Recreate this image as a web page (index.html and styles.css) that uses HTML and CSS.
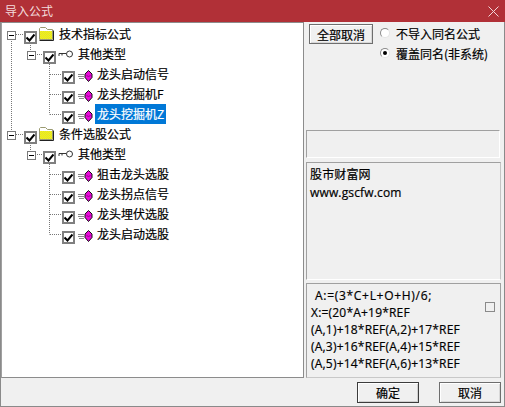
FILE: index.html
```html
<!DOCTYPE html>
<html lang="zh">
<head>
<meta charset="utf-8">
<title>导入公式</title>
<link rel="stylesheet" href="styles.css">
</head>
<body>
<svg width="0" height="0" class="defs">
  <defs>
    <pattern id="dither" width="2" height="2" patternUnits="userSpaceOnUse">
      <rect width="2" height="2" fill="#ffff00"/>
      <rect width="1" height="1" fill="#d8d840"/>
      <rect x="1" y="1" width="1" height="1" fill="#d8d840"/>
    </pattern>
    <g id="folder">
      <path d="M1.500 13.500V2.500L2.500 1.500H7.500L9.500 3.500H14.500V13.500Z" fill="#fff" stroke="#9a9a70"/>
      <path d="M2 5H14V13H2Z" fill="url(#dither)"/>
      <path d="M1.500 14.500H15.500V4.500" fill="none" stroke="#222"/>
    </g>
    <g id="key">
      <circle cx="11.500" cy="4" r="3" fill="#fff" stroke="#333"/>
      <path d="M8 3.500H1M1 3.500V6M4 3.500V5.500" fill="none" stroke="#333"/>
    </g>
    <g id="gem">
      <path d="M0 4.500H6M0 6.500H6M1 8.500H6" stroke="#8a8a8a" fill="none"/>
      <path d="M10.500 0.500L14 4V7.500L10.500 11.500L7 7.500V4Z" fill="#e808d8" stroke="#111"/>
      <path d="M8.500 5L10.500 7L12.500 5" fill="none" stroke="#900890"/>
    </g>
    <g id="tick">
      <path d="M0.500 4.500L3.500 7.500L8.500 1.500" fill="none" stroke="#000" stroke-width="2"/>
    </g>
  </defs>
</svg>
<div class="window">
  <header class="titlebar">
    <span>导入公式</span>
    <svg class="close" width="11" height="11" viewBox="0 0 11 11"><path d="M0.500 0.500L10.500 10.500M10.500 0.500L0.500 10.500" stroke="#f1d6d8" fill="none"/></svg>
  </header>
  <div class="body">
    <div class="tree">
      <svg class="lines" width="100" height="250" viewBox="0 0 100 250">
        <path d="M11.500 39V130M16 34.500H24M30.500 43V50M35 54.500H43M49.500 62V114.500M50 74.500H62M50 94.500H62M50 114.500H62M16 134.500H24M30.500 143V150M35 154.500H43M49.500 162V234.500M50 174.500H62M50 194.500H62M50 214.500H62M50 234.500H62" fill="none" stroke="#777" stroke-dasharray="1 1"/>
      </svg>
      <div class="row lvl0">
        <span class="exp"></span><span class="check"><svg width="9" height="9" viewBox="0 0 9 9"><use href="#tick"/></svg></span>
        <svg class="ico-folder" width="16" height="15" viewBox="0 0 16 15"><use href="#folder"/></svg>
        <span class="label">技术指标公式</span>
      </div>
      <div class="row lvl1">
        <span class="exp"></span><span class="check"><svg width="9" height="9" viewBox="0 0 9 9"><use href="#tick"/></svg></span>
        <svg class="ico-key" width="15" height="8" viewBox="0 0 15 8"><use href="#key"/></svg>
        <span class="label">其他类型</span>
      </div>
      <div class="row lvl2">
        <span class="check"><svg width="9" height="9" viewBox="0 0 9 9"><use href="#tick"/></svg></span>
        <svg class="ico-gem" width="15" height="12" viewBox="0 0 15 12"><use href="#gem"/></svg>
        <span class="label">龙头启动信号</span>
      </div>
      <div class="row lvl2">
        <span class="check"><svg width="9" height="9" viewBox="0 0 9 9"><use href="#tick"/></svg></span>
        <svg class="ico-gem" width="15" height="12" viewBox="0 0 15 12"><use href="#gem"/></svg>
        <span class="label">龙头挖掘机F</span>
      </div>
      <div class="row lvl2">
        <span class="check"><svg width="9" height="9" viewBox="0 0 9 9"><use href="#tick"/></svg></span>
        <svg class="ico-gem" width="15" height="12" viewBox="0 0 15 12"><use href="#gem"/></svg>
        <span class="label selected">龙头挖掘机Z</span>
      </div>
      <div class="row lvl0">
        <span class="exp"></span><span class="check"><svg width="9" height="9" viewBox="0 0 9 9"><use href="#tick"/></svg></span>
        <svg class="ico-folder" width="16" height="15" viewBox="0 0 16 15"><use href="#folder"/></svg>
        <span class="label">条件选股公式</span>
      </div>
      <div class="row lvl1">
        <span class="exp"></span><span class="check"><svg width="9" height="9" viewBox="0 0 9 9"><use href="#tick"/></svg></span>
        <svg class="ico-key" width="15" height="8" viewBox="0 0 15 8"><use href="#key"/></svg>
        <span class="label">其他类型</span>
      </div>
      <div class="row lvl2">
        <span class="check"><svg width="9" height="9" viewBox="0 0 9 9"><use href="#tick"/></svg></span>
        <svg class="ico-gem" width="15" height="12" viewBox="0 0 15 12"><use href="#gem"/></svg>
        <span class="label">狙击龙头选股</span>
      </div>
      <div class="row lvl2">
        <span class="check"><svg width="9" height="9" viewBox="0 0 9 9"><use href="#tick"/></svg></span>
        <svg class="ico-gem" width="15" height="12" viewBox="0 0 15 12"><use href="#gem"/></svg>
        <span class="label">龙头拐点信号</span>
      </div>
      <div class="row lvl2">
        <span class="check"><svg width="9" height="9" viewBox="0 0 9 9"><use href="#tick"/></svg></span>
        <svg class="ico-gem" width="15" height="12" viewBox="0 0 15 12"><use href="#gem"/></svg>
        <span class="label">龙头埋伏选股</span>
      </div>
      <div class="row lvl2">
        <span class="check"><svg width="9" height="9" viewBox="0 0 9 9"><use href="#tick"/></svg></span>
        <svg class="ico-gem" width="15" height="12" viewBox="0 0 15 12"><use href="#gem"/></svg>
        <span class="label">龙头启动选股</span>
      </div>
    </div>
    <div class="side">
      <div class="controls">
        <button class="btn btn-all">全部取消</button>
        <div class="radios">
          <div class="radio-row"><span class="radio"></span>不导入同名公式</div>
          <div class="radio-row"><span class="radio on"></span>覆盖同名(非系统)</div>
        </div>
      </div>
      <div class="etched"></div>
      <div class="info">股市财富网<br>www.gscfw.com</div>
      <div class="formula">
        <div class="code"><span class="first">A:=(3*C+L+O+H)/6;</span><br>X:=(20*A+19*REF<br>(A,1)+18*REF(A,2)+17*REF<br>(A,3)+16*REF(A,4)+15*REF<br>(A,5)+14*REF(A,6)+13*REF</div>
        <span class="small-check"></span>
      </div>
    </div>
  </div>
  <footer class="actions">
    <button class="btn btn-ok">确定</button>
    <button class="btn btn-cancel">取消</button>
  </footer>
</div>
</body>
</html>
```
FILE: styles.css
```css
* { box-sizing: border-box; }
html, body { margin: 0; padding: 0; }
body {
  width: 505px;
  height: 407px;
  overflow: hidden;
  font-family: "Noto Sans CJK SC", "Open Sans", sans-serif;
  font-size: 12px;
  color: #000;
  background: #f0f0f0;
  -webkit-text-stroke: 0.2px currentColor;
}
.defs { position: absolute; }
.window {
  width: 505px;
  height: 407px;
  display: flex;
  flex-direction: column;
  border: solid #8a8a8a;
  border-width: 0 1px 1px 1px;
  background: #f0f0f0;
}
.titlebar {
  height: 22px;
  flex: none;
  margin: 0 -1px;
  padding: 0 6px 0 5px;
  background: #b13037;
  color: #f3dcdd;
  display: flex;
  align-items: center;
  justify-content: space-between;
  line-height: 22px;
  -webkit-text-stroke: 0;
}
.body {
  height: 356px;
  flex: none;
  display: flex;
}
.tree {
  position: relative;
  width: 303px;
  height: 356px;
  padding-top: 1px;
  background: #fff;
  border: 1px solid #8c8c8c;
  border-left-color: #a0a0a0;
}
.lines { position: absolute; left: -2px; top: -23px; }
.row {
  position: relative;
  height: 20px;
  display: flex;
  align-items: center;
}
.lvl0 { padding-left: 5px; }
.lvl1 { padding-left: 25px; }
.lvl2 { padding-left: 60px; }
.exp {
  position: relative;
  width: 9px;
  height: 9px;
  margin-right: 8px;
  align-self: flex-start;
  margin-top: 7px;
  border: 1px solid #7a7a7a;
  background: #fff;
}
.lvl1 .exp { margin-right: 7px; }
.exp::after {
  content: "";
  position: absolute;
  left: 1px;
  top: 3px;
  width: 5px;
  height: 1px;
  background: #000;
}
.check {
  width: 13px;
  height: 13px;
  flex: none;
  align-self: flex-end;
  display: flex;
  align-items: center;
  justify-content: center;
  border: 2px solid #7f7f7f;
  background: #fff;
}
.check svg { display: block; }
.ico-folder { flex: none; margin: -1px 3px 0 1px; }
.ico-key { flex: none; margin: -1px 3px 0 2px; }
.ico-gem { flex: none; margin: 3px 2px 0 3px; }
.label { padding: 0 2px; line-height: 20px; white-space: nowrap; }
.selected { background: #0078d7; color: #fff; }
.side {
  width: 200px;
  flex: none;
  padding: 2px 3px 0 2px;
  display: flex;
  flex-direction: column;
}
.controls { height: 106px; display: flex; align-items: flex-start; padding-left: 3px; }
.btn {
  font: inherit;
  color: #000;
  padding: 0;
  background: #f0f0f0;
  border: 1px solid #6e6e6e;
  box-shadow: inset 1px 1px 0 #fff, inset -1px -1px 0 #d8d8d8;
}
.btn-all { width: 64px; height: 20px; line-height: 17px; }
.radios { margin-left: 7px; margin-top: -1px; }
.radio-row { height: 20px; display: flex; align-items: center; gap: 6px; white-space: nowrap; }
.radio {
  width: 10px;
  height: 10px;
  border-radius: 50%;
  background: #fff;
  border: 1px solid #8a8a8a;
  border-right-color: #e4e4e4;
  border-bottom-color: #e4e4e4;
  display: flex;
  align-items: center;
  justify-content: center;
}
.on::after { content: ""; width: 4px; height: 4px; border-radius: 50%; background: #000; }
.etched {
  height: 28px;
  margin-right: 1px;
  border: 1px solid #fff;
  border-top-color: #a0a0a0;
  border-left-color: #a0a0a0;
}
.info {
  height: 118px;
  margin-top: 4px;
  padding: 3px 3px;
  line-height: 18px;
  letter-spacing: 0.15px;
  border: 1px solid #a0a0a0;
  border-right-color: #c4c4c4;
  border-bottom-color: #fff;
  font-family: "Open Sans", "Noto Sans CJK SC", sans-serif;
}
.formula {
  height: 95px;
  margin-top: 3px;
  padding: 3px 5px 0 4px;
  border: 1px solid #a0a0a0;
  border-bottom-color: #c8c8c8;
  display: flex;
  justify-content: space-between;
  align-items: flex-start;
}
.code {
  font-family: "Open Sans", sans-serif;
  letter-spacing: 0.2px;
  line-height: 17px;
  white-space: nowrap;
}
.first { margin-left: 4px; letter-spacing: 0.7px; }
.small-check {
  width: 10px;
  height: 10px;
  margin-top: 15px;
  border: 1px solid #8a8a8a;
  background: #f0f0f0;
}
.actions {
  flex: 1;
  display: flex;
  justify-content: flex-end;
  align-items: flex-start;
  gap: 20px;
  padding: 4px 3px 0 0;
}
.btn-ok, .btn-cancel { width: 62px; height: 21px; line-height: 17px; }
.btn-ok { border-color: #3c3c3c; box-shadow: inset 1px 1px 0 #fff, inset -1px -1px 0 #cfcfcf; }
```
